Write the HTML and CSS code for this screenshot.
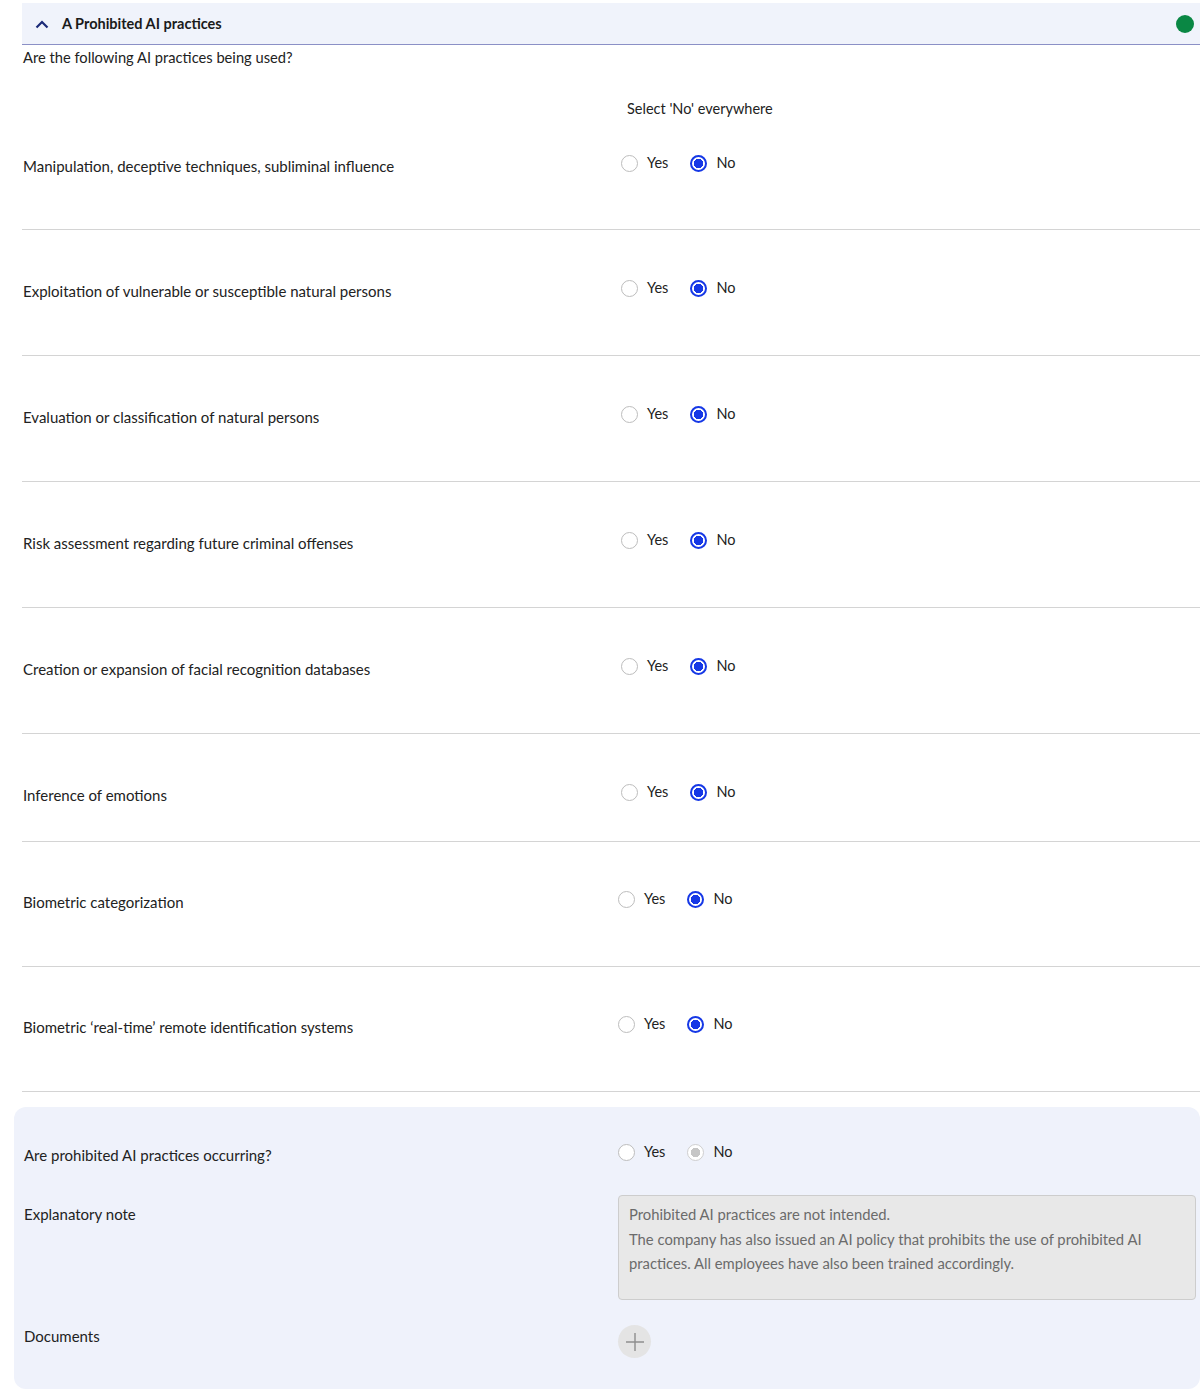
FILE: index.html
```html
<!DOCTYPE html>
<html lang="en">
<head>
    <meta charset="UTF-8">
    <title>A Prohibited AI practices</title>
    <link rel="stylesheet" href="styles.css">
</head>
<body>
    <section class="section">
        <div class="section-head">
            <svg class="chevron" width="14" height="10" viewBox="0 0 14 10">
                <path d="M1.5 8.5 L7 3 L12.5 8.5" fill="none" stroke="#1b2a78" stroke-width="2.2"/>
            </svg>
            <h2>A Prohibited AI practices</h2>
            <span class="status-dot"></span>
        </div>
        <p class="intro">Are the following AI practices being used?</p>
        <div class="select-all">
            <span></span>
            <span>Select 'No' everywhere</span>
        </div>

        <div class="row first">
            <div class="label">Manipulation, deceptive techniques, subliminal influence</div>
            <div class="choices">
                <label class="radio"><span class="dot"></span>Yes</label>
                <label class="radio"><span class="dot on"></span>No</label>
            </div>
        </div>
        <div class="row">
            <div class="label">Exploitation of vulnerable or susceptible natural persons</div>
            <div class="choices">
                <label class="radio"><span class="dot"></span>Yes</label>
                <label class="radio"><span class="dot on"></span>No</label>
            </div>
        </div>
        <div class="row">
            <div class="label">Evaluation or classification of natural persons</div>
            <div class="choices">
                <label class="radio"><span class="dot"></span>Yes</label>
                <label class="radio"><span class="dot on"></span>No</label>
            </div>
        </div>
        <div class="row">
            <div class="label">Risk assessment regarding future criminal offenses</div>
            <div class="choices">
                <label class="radio"><span class="dot"></span>Yes</label>
                <label class="radio"><span class="dot on"></span>No</label>
            </div>
        </div>
        <div class="row">
            <div class="label">Creation or expansion of facial recognition databases</div>
            <div class="choices">
                <label class="radio"><span class="dot"></span>Yes</label>
                <label class="radio"><span class="dot on"></span>No</label>
            </div>
        </div>
        <div class="row short">
            <div class="label">Inference of emotions</div>
            <div class="choices">
                <label class="radio"><span class="dot"></span>Yes</label>
                <label class="radio"><span class="dot on"></span>No</label>
            </div>
        </div>
        <div class="row shifted">
            <div class="label">Biometric categorization</div>
            <div class="choices">
                <label class="radio"><span class="dot"></span>Yes</label>
                <label class="radio"><span class="dot on"></span>No</label>
            </div>
        </div>
        <div class="row shifted">
            <div class="label">Biometric ‘real-time’ remote identification systems</div>
            <div class="choices">
                <label class="radio"><span class="dot"></span>Yes</label>
                <label class="radio"><span class="dot on"></span>No</label>
            </div>
        </div>

        <div class="summary">
            <div class="label q">Are prohibited AI practices occurring?</div>
            <div class="choices">
                <label class="radio"><span class="dot"></span>Yes</label>
                <label class="radio"><span class="dot off"></span>No</label>
            </div>

            <div class="label note-label">Explanatory note</div>
            <div class="note">Prohibited AI practices are not intended.<br>The company has also issued an AI policy that prohibits the use of prohibited AI practices. All employees have also been trained accordingly.</div>

            <div class="label docs-label">Documents</div>
            <div>
                <button class="add-btn" type="button">
                    <svg width="20" height="20" viewBox="0 0 20 20">
                        <path d="M10 1 V19 M1 10 H19" stroke="#8e8e8e" stroke-width="1.4"/>
                    </svg>
                </button>
            </div>
        </div>
    </section>
</body>
</html>
```

FILE: styles.css
```css
body {
    margin: 0;
    padding: 3px 0 0 0;
    font-family: Lato, "Noto Sans", sans-serif;
    font-size: 14.5px;
    color: #222;
    background: #fff;
}
.section {
    margin-left: 22px;
}
.section-head {
    display: flex;
    align-items: center;
    height: 41px;
    padding: 0 6px 0 13px;
    background-color: #f0f3fb;
    border-bottom: 1.5px solid #8b90c6;
}
.chevron {
    margin-right: 13px;
}
.section-head h2 {
    flex: 1;
    margin: 0;
    font-size: 14.5px;
    font-weight: 700;
    color: #1a1a1a;
}
.status-dot {
    width: 18px;
    height: 18px;
    border-radius: 50%;
    background-color: #0a8744;
}
.intro {
    margin: 2px 0 0 1px;
    font-size: 14.7px;
    line-height: 20px;
}
.select-all {
    display: grid;
    grid-template-columns: 605px 1fr;
    margin-top: 32px;
    line-height: 20px;
}
.row {
    display: grid;
    grid-template-columns: 599px 1fr;
    align-items: start;
    padding: 51px 0 54px 0;
    border-bottom: 1px solid #d4d4d4;
}
.row.first {
    padding-top: 37px;
    padding-bottom: 53px;
}
.row.short {
    padding-bottom: 36px;
}
.row.shifted {
    padding-top: 50px;
    grid-template-columns: 596px 1fr;
}
.label {
    font-size: 15px;
    line-height: 20px;
    padding-left: 1px;
}
.choices {
    display: flex;
    gap: 22px;
    margin-top: -3px;
    line-height: 20px;
}
.radio {
    display: flex;
    align-items: center;
    gap: 9px;
    cursor: pointer;
}
.dot {
    box-sizing: border-box;
    width: 17px;
    height: 17px;
    border-radius: 50%;
    border: 1.5px solid #bdbdbd;
    background: #fff;
}
.dot.on {
    border: 2px solid #1638e6;
    background: radial-gradient(circle, #1638e6 0 4.5px, #fff 5px);
}
.dot.off {
    border: 1.5px solid #cfcfcf;
    background: radial-gradient(circle, #c6c6c6 0 4.5px, #fff 5px);
}
.summary {
    display: grid;
    grid-template-columns: 595px 1fr;
    margin: 15px 0 0 -8px;
    padding: 38px 4px 31px 9px;
    background-color: #eff2fb;
    border-radius: 12px;
}
.summary .choices {
    margin-bottom: 33px;
}
.note-label {
    padding-top: 9px;
}
.note {
    box-sizing: border-box;
    min-height: 105px;
    padding: 6px 10px;
    background-color: #e8e8e8;
    border: 1px solid #cdcdcd;
    border-radius: 4px;
    color: #6b6b6b;
    font-size: 14.8px;
    line-height: 24.5px;
}
.docs-label {
    padding-top: 26px;
}
.add-btn {
    display: flex;
    align-items: center;
    justify-content: center;
    width: 33px;
    height: 33px;
    margin-top: 25px;
    border: none;
    border-radius: 50%;
    background-color: #e4e4e4;
    padding: 0;
}
```
